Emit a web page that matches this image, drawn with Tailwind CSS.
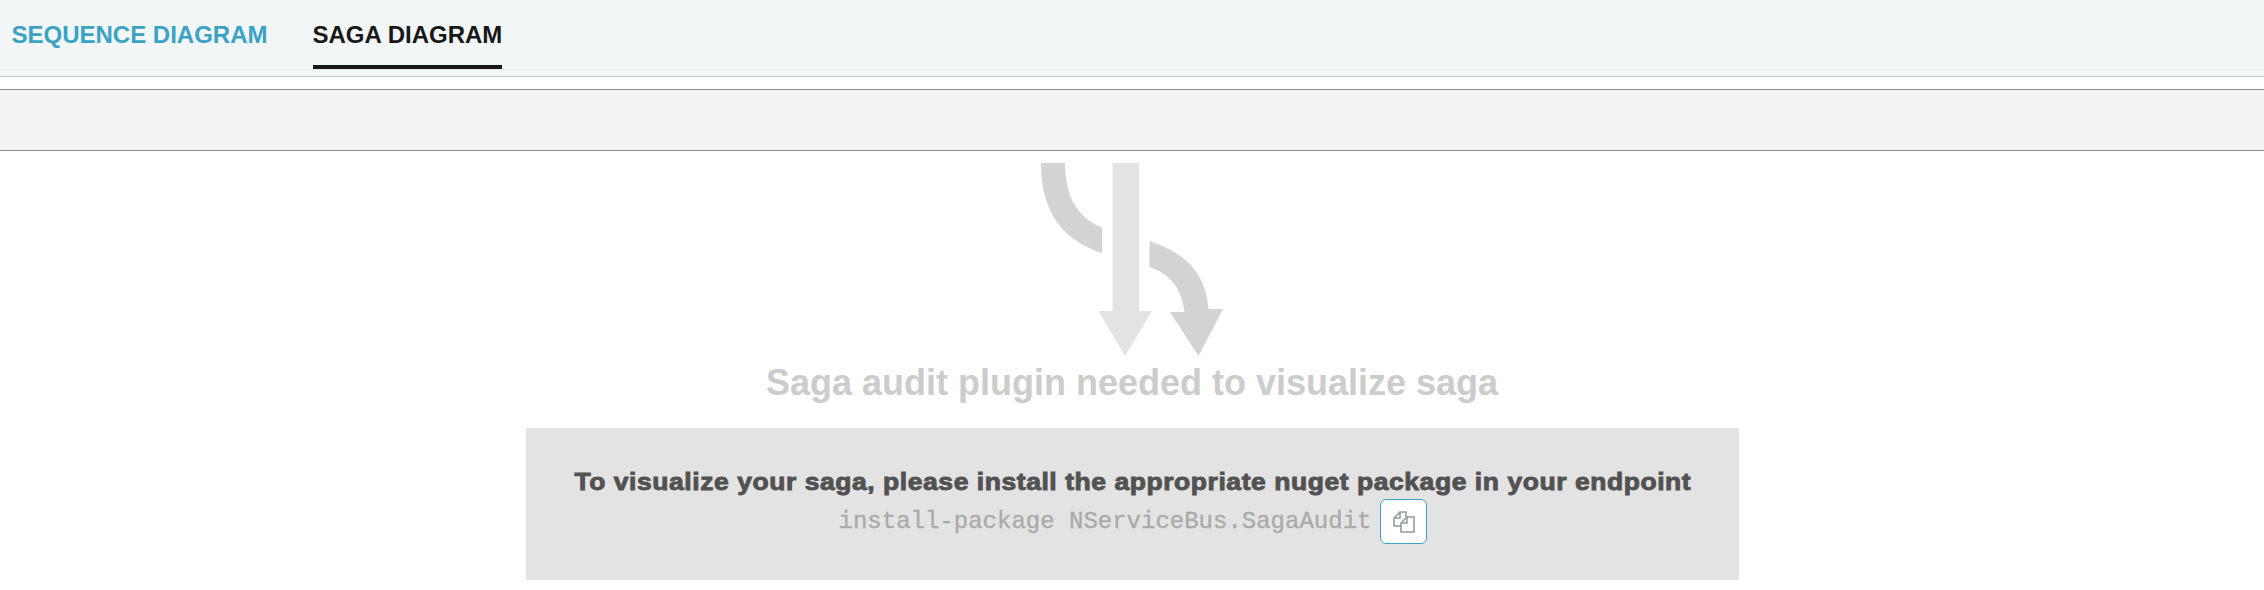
<!DOCTYPE html>
<html lang="en">
<head>
<meta charset="utf-8">
<title>Saga Diagram</title>
<script src="https://cdn.jsdelivr.net/npm/@tailwindcss/browser@4"></script>
</head>
<body class="bg-white overflow-hidden font-['Liberation_Sans',Arial,sans-serif]">
<header class="h-[77px] bg-[#f2f6f7] border-b border-[#c5cbcc]">
  <nav class="h-[70px] flex gap-[45px] pl-[11.5px] border-b border-[#e3e8e8] text-2xl font-bold leading-[70px]">
    <a class="h-[69px] text-[#3aa3c3] whitespace-nowrap">SEQUENCE DIAGRAM</a>
    <a class="h-[69px] text-[#181818] border-b-4 border-[#181818] whitespace-nowrap">SAGA DIAGRAM</a>
  </nav>
</header>
<div class="mt-3 h-[62px] bg-[#f3f3f3] border-y border-[#8c8c8c]"></div>
<main class="flex flex-col items-center">
  <svg class="mt-3 ml-0.5 w-[184px] h-[193px]" viewBox="0 0 184 193">
    <path fill="#d3d3d3" d="M0 0H24C24 32 35 54 61 64.500V90C22 77 0 50 0 0Z"/>
    <path fill="#e3e3e3" d="M71.500 0H98V148H111L84 193L57.500 148H71.500Z"/>
    <path fill="#d3d3d3" d="M108.500 78C146 90 165 112 167.500 146H182L157.500 193L129 149H143.500C141 127 130 111 108.500 104Z"/>
  </svg>
  <h1 class="mt-2 h-[42px] text-4xl leading-[38px] font-bold text-[#cccccc] whitespace-nowrap">Saga audit plugin needed to visualize saga</h1>
  <section class="mt-[22px] w-[1213px] h-[152px] pt-9 bg-[#e3e3e3] flex flex-col items-center">
    <p class="h-[35px] ml-px leading-[36px] text-2xl font-bold tracking-[0.5px] scale-x-[1.104] [-webkit-text-stroke:0.9px_#525252] text-[#525252] whitespace-nowrap">To visualize your saga, please install the appropriate nuget package in your endpoint</p>
    <div class="flex items-center ml-0.5">
      <code class="font-['Liberation_Mono',monospace] text-2xl text-[#aaaaaa] [-webkit-text-stroke:0.3px_#aaaaaa] whitespace-pre">install-package NServiceBus.SagaAudit</code>
      <button class="ml-[9px] w-[47px] h-[45px] bg-white border border-[#3aa3c3] rounded-md flex items-center justify-center">
        <svg class="w-[22px] h-[22px]" viewBox="0 0 22 22" fill="none" stroke="#929e9e" stroke-width="1.600"><path d="M8 15H1V7L7 1H13V6M7 1V7H1M14 6H21V21H8V12L14 6ZM14 6V12H8"/></svg>
      </button>
    </div>
  </section>
</main>
</body>
</html>
